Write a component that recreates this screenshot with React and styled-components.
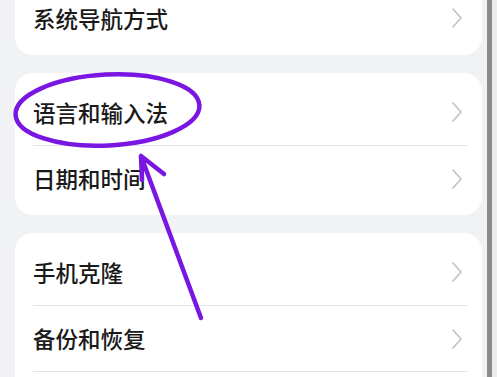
import React from "react";
import styled, { createGlobalStyle } from "styled-components";

const GlobalStyle = createGlobalStyle`
  html, body {
    margin: 0;
    padding: 0;
    overflow: hidden;
    background: #f1f2f4;
  }
`;

const Screen = styled.div`
  position: relative;
  display: flex;
  width: 497px;
  height: 377px;
  overflow: hidden;
  background: #f1f2f4;
  font-family: "Noto Sans CJK SC", "Noto Sans", sans-serif;
`;

const List = styled.div`
  flex: 1;
  display: flex;
  flex-direction: column;
  gap: 18px;
  padding: 0 5px 0 15px;
  margin-top: -21px;
`;

const Card = styled.div`
  background: #ffffff;
  border-radius: 18px;
  padding: 6px 0 4px;
`;

const Row = styled.div`
  display: flex;
  align-items: center;
  justify-content: space-between;
  height: 66px;
  margin: 0 14px 0 18px;
  border-top: ${(p) => (p.$first ? "none" : "1px solid #e4e4e4")};
  box-sizing: border-box;
`;

const Label = styled.span`
  font-size: 22.5px;
  font-weight: 500;
  line-height: 1;
  color: #1a1a1a;
`;

const Chevron = styled.svg`
  width: 12px;
  height: 20px;
  margin-right: 5px;
  flex-shrink: 0;
`;

const FrameEdge = styled.div`
  display: flex;
  width: 10px;
`;

const EdgeLine = styled.div`
  width: 5px;
  background: ${(p) => p.$color};
`;

const Annotation = styled.svg`
  position: absolute;
  left: 0;
  top: 0;
  width: 497px;
  height: 377px;
  pointer-events: none;
`;

// the last row of the third card is scrolled below the fold; only its divider shows
const cards = [
  ["系统导航方式"],
  ["语言和输入法", "日期和时间"],
  ["手机克隆", "备份和恢复", null],
];

function Arrow() {
  return (
    <Chevron viewBox="0 0 12 20">
      <path
        d="M2 1 L10 10 L2 19"
        fill="none"
        stroke="#c2c2c2"
        strokeWidth="1.6"
        strokeLinecap="round"
        strokeLinejoin="round"
      />
    </Chevron>
  );
}

export default function App() {
  return (
    <Screen>
      <GlobalStyle />
      <List>
        {cards.map((items, i) => (
          <Card key={i}>
            {items.map((label, j) => (
              <Row key={j} $first={j === 0}>
                {label && <Label>{label}</Label>}
                {label && <Arrow />}
              </Row>
            ))}
          </Card>
        ))}
      </List>
      <FrameEdge>
        <EdgeLine $color="#8c8c8c" />
        <EdgeLine $color="#ececec" />
      </FrameEdge>
      <Annotation viewBox="0 0 497 377">
        <ellipse
          cx="107.5"
          cy="110"
          rx="92"
          ry="35.5"
          transform="rotate(-3 107.5 110)"
          fill="none"
          stroke="#7a16e2"
          strokeWidth="4.5"
        />
        <path
          d="M201 318 L141 156 M141 156 L164 174 M141 156 L142 180"
          fill="none"
          stroke="#7a16e2"
          strokeWidth="4.5"
          strokeLinecap="round"
          strokeLinejoin="round"
        />
      </Annotation>
    </Screen>
  );
}
